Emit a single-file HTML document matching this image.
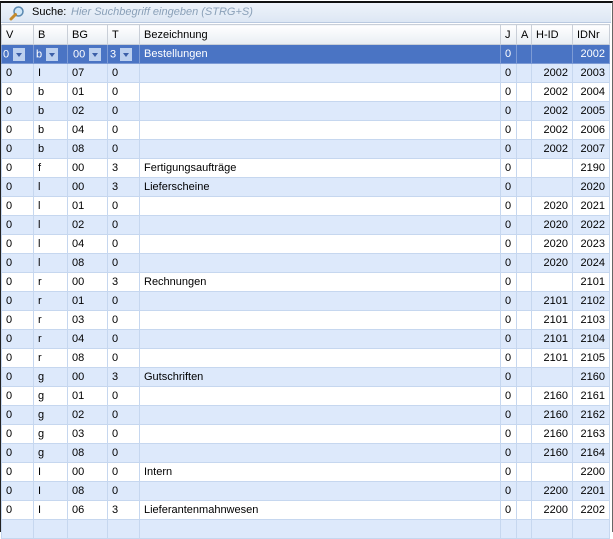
<!DOCTYPE html><html><head><style>
body{margin:0;width:613px;height:530px;overflow:hidden;background:#fff;font-family:"Liberation Sans",sans-serif;font-size:11px;color:#000;position:relative}
.frame{position:absolute;left:0;top:1px;width:611px;height:529px;border-left:1px solid #222;border-top:2px solid #111;border-right:1px solid #666}
.search{position:absolute;left:1px;top:3px;width:610px;height:19px;background:linear-gradient(#eef3fa,#dde7f4);border-bottom:1px solid #b9c9e0}
.search .lbl{position:absolute;left:31px;top:3px}
.search .ph{position:absolute;left:70px;top:3px;color:#8aa0b8;font-style:italic}
table{position:absolute;left:1px;top:24px;border-collapse:collapse;table-layout:fixed;width:608px}
td,th{height:18px;padding:0 4px;border:1px solid #c6d7ef;white-space:nowrap;overflow:hidden;font-weight:normal;text-align:left}
th{background:linear-gradient(#ffffff,#e8edf3);border-color:#c9cfd8;height:19px}
tr.a td{background:#dde9fb}
tr.w td{background:#fff}
tr.sel td{background:#4a74c4;color:#fff;border-color:#7d9bd5}
.r{text-align:right}
.dd{display:inline-block;width:12px;height:13px;background:#bcd0ef;vertical-align:middle;margin-left:4px;position:relative}
.dd:after{content:"";position:absolute;left:3px;top:5px;border:3px solid transparent;border-top:4px solid #3c5fa8}
</style></head><body>
<div class="frame"></div>
<div class="search">
<svg style="position:absolute;left:8px;top:2px" width="16" height="16" viewBox="0 0 16 16"><circle cx="9.5" cy="6.5" r="4.5" fill="#cfe6f7" stroke="#5a88b0" stroke-width="1.5"/><path d="M6.5 9.5 L2 14" stroke="#c58a2a" stroke-width="3" stroke-linecap="round"/></svg>
<span class="lbl">Suche:</span><span class="ph">Hier Suchbegriff eingeben (STRG+S)</span></div>
<table>
<colgroup><col style="width:32px"><col style="width:34px"><col style="width:40px"><col style="width:32px"><col style="width:361px"><col style="width:16px"><col style="width:15px"><col style="width:41px"><col style="width:37px"></colgroup>
<tr><th>V</th><th>B</th><th>BG</th><th>T</th><th>Bezeichnung</th><th>J</th><th>A</th><th>H-ID</th><th>IDNr</th></tr>
<tr class="sel"><td style="padding:0 1px">0<span class="dd"></span></td><td style="padding:0 2px">b<span class="dd"></span></td><td style="padding:0 2px">&nbsp;00<span class="dd"></span></td><td style="padding:0 2px">3<span class="dd"></span></td><td>Bestellungen</td><td>0</td><td></td><td></td><td class="r">2002</td></tr>
<tr class="a"><td>0</td><td>I</td><td>07</td><td>0</td><td></td><td>0</td><td></td><td class="r">2002</td><td class="r">2003</td></tr>
<tr class="w"><td>0</td><td>b</td><td>01</td><td>0</td><td></td><td>0</td><td></td><td class="r">2002</td><td class="r">2004</td></tr>
<tr class="a"><td>0</td><td>b</td><td>02</td><td>0</td><td></td><td>0</td><td></td><td class="r">2002</td><td class="r">2005</td></tr>
<tr class="w"><td>0</td><td>b</td><td>04</td><td>0</td><td></td><td>0</td><td></td><td class="r">2002</td><td class="r">2006</td></tr>
<tr class="a"><td>0</td><td>b</td><td>08</td><td>0</td><td></td><td>0</td><td></td><td class="r">2002</td><td class="r">2007</td></tr>
<tr class="w"><td>0</td><td>f</td><td>00</td><td>3</td><td>Fertigungsaufträge</td><td>0</td><td></td><td></td><td class="r">2190</td></tr>
<tr class="a"><td>0</td><td>l</td><td>00</td><td>3</td><td>Lieferscheine</td><td>0</td><td></td><td></td><td class="r">2020</td></tr>
<tr class="w"><td>0</td><td>l</td><td>01</td><td>0</td><td></td><td>0</td><td></td><td class="r">2020</td><td class="r">2021</td></tr>
<tr class="a"><td>0</td><td>l</td><td>02</td><td>0</td><td></td><td>0</td><td></td><td class="r">2020</td><td class="r">2022</td></tr>
<tr class="w"><td>0</td><td>l</td><td>04</td><td>0</td><td></td><td>0</td><td></td><td class="r">2020</td><td class="r">2023</td></tr>
<tr class="a"><td>0</td><td>l</td><td>08</td><td>0</td><td></td><td>0</td><td></td><td class="r">2020</td><td class="r">2024</td></tr>
<tr class="w"><td>0</td><td>r</td><td>00</td><td>3</td><td>Rechnungen</td><td>0</td><td></td><td></td><td class="r">2101</td></tr>
<tr class="a"><td>0</td><td>r</td><td>01</td><td>0</td><td></td><td>0</td><td></td><td class="r">2101</td><td class="r">2102</td></tr>
<tr class="w"><td>0</td><td>r</td><td>03</td><td>0</td><td></td><td>0</td><td></td><td class="r">2101</td><td class="r">2103</td></tr>
<tr class="a"><td>0</td><td>r</td><td>04</td><td>0</td><td></td><td>0</td><td></td><td class="r">2101</td><td class="r">2104</td></tr>
<tr class="w"><td>0</td><td>r</td><td>08</td><td>0</td><td></td><td>0</td><td></td><td class="r">2101</td><td class="r">2105</td></tr>
<tr class="a"><td>0</td><td>g</td><td>00</td><td>3</td><td>Gutschriften</td><td>0</td><td></td><td></td><td class="r">2160</td></tr>
<tr class="w"><td>0</td><td>g</td><td>01</td><td>0</td><td></td><td>0</td><td></td><td class="r">2160</td><td class="r">2161</td></tr>
<tr class="a"><td>0</td><td>g</td><td>02</td><td>0</td><td></td><td>0</td><td></td><td class="r">2160</td><td class="r">2162</td></tr>
<tr class="w"><td>0</td><td>g</td><td>03</td><td>0</td><td></td><td>0</td><td></td><td class="r">2160</td><td class="r">2163</td></tr>
<tr class="a"><td>0</td><td>g</td><td>08</td><td>0</td><td></td><td>0</td><td></td><td class="r">2160</td><td class="r">2164</td></tr>
<tr class="w"><td>0</td><td>I</td><td>00</td><td>0</td><td>Intern</td><td>0</td><td></td><td></td><td class="r">2200</td></tr>
<tr class="a"><td>0</td><td>I</td><td>08</td><td>0</td><td></td><td>0</td><td></td><td class="r">2200</td><td class="r">2201</td></tr>
<tr class="w"><td>0</td><td>I</td><td>06</td><td>3</td><td>Lieferantenmahnwesen</td><td>0</td><td></td><td class="r">2200</td><td class="r">2202</td></tr>
<tr class="a"><td></td><td></td><td></td><td></td><td></td><td></td><td></td><td></td><td></td></tr>
</table>
</body></html>
